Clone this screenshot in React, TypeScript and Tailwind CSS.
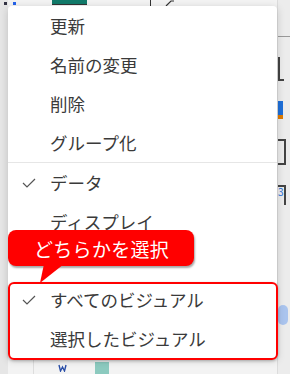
import React from 'react'

const font = { fontFamily: '"Noto Sans CJK JP", "Noto Sans", sans-serif' }

function Check() {
  return (
    <svg width="14" height="10" viewBox="0 0 14 10" fill="none">
      <path d="M1 5 L5 9 L13 1" stroke="#555" strokeWidth="1.2" />
    </svg>
  )
}

function Item({ label, checked }: { label?: string; checked?: boolean }) {
  return (
    <div className="h-[39px] flex items-center">
      <div className="w-[42px] flex justify-end pr-[14px]">{checked && <Check />}</div>
      <span className="text-[17.5px] text-[#3a3a3a] leading-none">{label}</span>
    </div>
  )
}

export default function App() {
  return (
    <div className="relative w-[290px] h-[374px] bg-[#f3f3f3] overflow-hidden flex" style={font}>
      {/* background app, mostly hidden behind the menu */}
      <div className="w-[8px] h-full bg-[#e6e6e6] flex gap-[6px] pt-[2px] pl-[4px]">
        <div className="w-[3px] h-[3px] bg-[#334]" />
      </div>
      <div className="flex-1 flex flex-col justify-between">
        <div className="flex items-start h-[6px]">
          <div className="w-[3px] h-[3px] mt-[2px] ml-[5px] bg-[#2563eb]" />
          <div className="w-[35px] h-[5px] ml-[36px] bg-[#127a6a] border-b border-[#333]" />
          <div className="w-[1px] h-[6px] ml-[63px] bg-[#333]" />
          <svg className="ml-[14px]" width="10" height="6" viewBox="0 0 10 6">
            <path d="M1 6 L6 1 L9 1" stroke="#333" strokeWidth="1.2" fill="none" />
          </svg>
        </div>
        <div className="flex items-end h-[14px]">
          <div className="w-[1px] h-[14px] ml-[25px] bg-[#ddd]" />
          <svg className="ml-[24px] mb-[2px]" width="9" height="8" viewBox="0 0 9 8">
            <path d="M1 1 L2.5 7 L4.5 3 L6.5 7 L8 1" stroke="#2b4fa8" strokeWidth="1.4" fill="none" />
          </svg>
          <div className="w-[14px] h-[12px] ml-[28px] bg-[#5fb8a8] opacity-70" />
        </div>
      </div>
      <div className="w-[13px] h-full bg-[#ececec] border-l border-[#dcdcdc] flex flex-col pt-[36px] gap-[20px]">
        <div className="h-[1px] bg-[#999]" />
        <div className="w-[6px] h-[24px] border-l-2 border-b-2 border-[#444]" />
        <div className="flex flex-col">
          <div className="w-[5px] h-[14px] bg-[#1e6fd9]" />
          <div className="w-[5px] h-[4px] bg-[#e07b00]" />
        </div>
        <div className="w-[8px] h-[26px] border-r-2 border-t-2 border-b-2 border-[#444]" />
        <div className="w-[8px] h-[20px] border-r-2 border-t-2 border-[#444] text-[10px] text-[#1e6fd9] leading-none">3</div>
        <div className="w-[10px] h-[20px] mt-[80px] rounded-full bg-[#8fb4ef] opacity-70" />
      </div>

      {/* context menu */}
      <div className="absolute left-[8px] top-[6px] w-[269px] bg-white rounded-[4px] shadow-[0_2px_8px_rgba(0,0,0,0.18)]">
        <Item label="更新" />
        <Item label="名前の変更" />
        <Item label="削除" />
        <Item label="グループ化" />
        <div className="h-[1px] bg-[#e6e6e6]" />
        <Item label="データ" checked />
        <Item label="ディスプレイ" />
        <Item />
        <Item label="すべてのビジュアル" checked />
        <Item label="選択したビジュアル" />
      </div>

      {/* highlight box */}
      <div className="absolute left-[8px] top-[282px] w-[270px] h-[78px] border-2 border-[#ff0000] rounded-[6px] shadow-[0_1px_3px_rgba(0,0,0,0.25)]" />

      {/* callout */}
      <div className="absolute left-[8px] top-[230px]">
        <div className="relative w-[186px] h-[36px] bg-[#ff0000] rounded-[8px] shadow-[1px_2px_2px_rgba(0,0,0,0.35)] flex items-center pl-[26px]">
          <span className="text-white text-[19px] leading-none tracking-[0.3px]">どちらかを選択</span>
        </div>
        <svg className="absolute left-[30px] top-[34px]" width="36" height="20" viewBox="0 0 36 20">
          <polygon points="6,0 26,0 2,19" fill="#ff0000" />
        </svg>
      </div>
    </div>
  )
}
